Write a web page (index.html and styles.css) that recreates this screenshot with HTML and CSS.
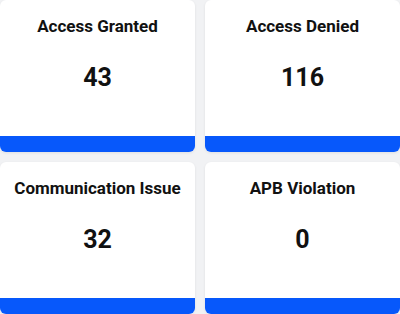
FILE: index.html
```html
<!DOCTYPE html>
<html>
<head>
  <meta charset="utf-8">
  <title>Access stats</title>
  <link rel="stylesheet" href="styles.css">
</head>
<body>
  <div class="stats">
    <div class="card">
      <div class="title">Access Granted</div>
      <div class="count">43</div>
      <div class="bar"></div>
    </div>
    <div class="card">
      <div class="title">Access Denied</div>
      <div class="count">116</div>
      <div class="bar"></div>
    </div>
    <div class="card">
      <div class="title">Communication Issue</div>
      <div class="count">32</div>
      <div class="bar"></div>
    </div>
    <div class="card">
      <div class="title">APB Violation</div>
      <div class="count">0</div>
      <div class="bar"></div>
    </div>
  </div>
</body>
</html>
```
FILE: styles.css
```css
body {
  margin: 0;
  background-color: #f1f2f4;
  font-family: Roboto, "Liberation Sans", sans-serif;
  color: #111;
}
.stats {
  display: grid;
  grid-template-columns: 195px 195px;
  gap: 10px;
  width: 400px;
}
.card {
  height: 152px;
  background-color: #fff;
  border-radius: 6px;
  box-shadow: 0 1px 3px rgba(0, 0, 0, 0.08);
  display: flex;
  flex-direction: column;
  align-items: center;
  overflow: hidden;
}
.title {
  margin-top: 15px;
  font-size: 17px;
  font-weight: 700;
  line-height: 22px;
}
.count {
  margin-top: 24px;
  font-size: 25px;
  font-weight: 700;
  line-height: 34px;
}
.bar {
  margin-top: auto;
  width: 100%;
  height: 16px;
  background-color: #0758fb;
}
```
